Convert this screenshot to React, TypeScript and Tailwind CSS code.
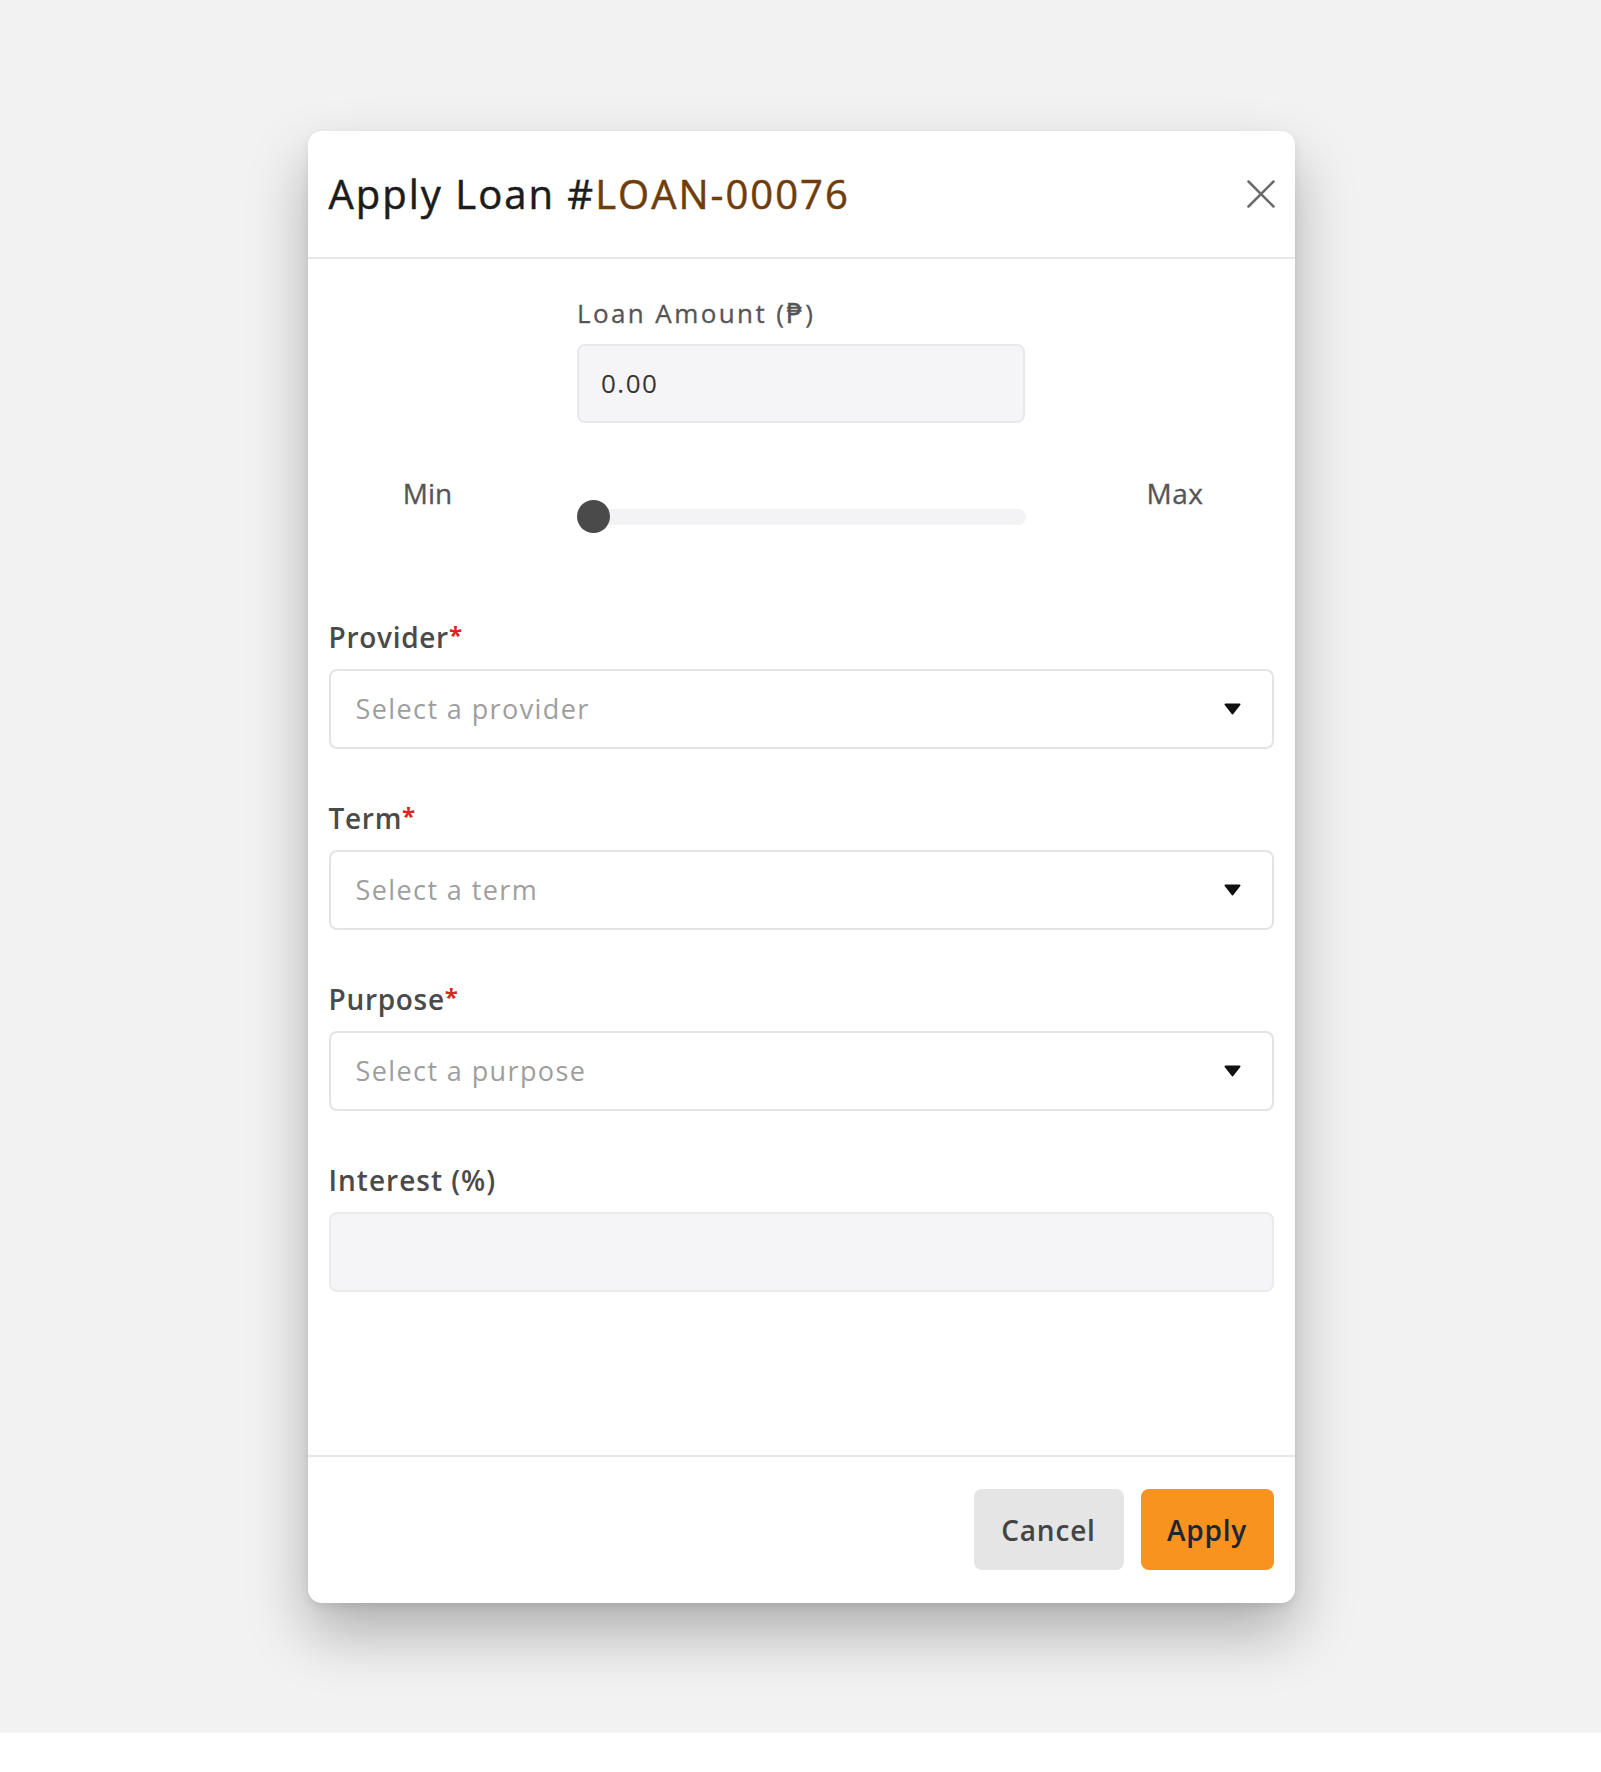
export default function App() {
  const Arrow = () => (
    <svg width="17" height="12" viewBox="0 0 17 12" className="shrink-0">
      <path d="M1.5 1.5 L15.5 1.5 L8.5 10.5 Z" fill="#111" stroke="#111" strokeWidth="2" strokeLinejoin="round" />
    </svg>
  );

  const Req = () => (
    <span className="relative -top-[4px] text-[24px] leading-[0] text-[#e02424] font-bold">*</span>
  );

  return (
    <div className="w-[1601px] min-h-[1772px] bg-white font-['Open_Sans','DejaVu_Sans',sans-serif]">
      <div className="h-[1733px] bg-[#f2f2f2] pt-[131px] pl-[1px] flex justify-center items-start">
        <div className="w-[987px] bg-white rounded-[14px] shadow-[0_30px_60px_rgba(0,0,0,0.28),0_4px_10px_rgba(0,0,0,0.08)] flex flex-col">
          {/* Header */}
          <div className="h-[128px] flex items-center justify-between pl-[21px] pr-[20px] border-b-2 border-[#e8e8eb]">
            <h1 className="text-[40px] leading-[40px] font-medium text-[#1c1c1c] tracking-[2px] [-webkit-text-stroke:0.5px_currentcolor]">
              Apply Loan #<span className="text-[#6f3d0b]">LOAN-00076</span>
            </h1>
            <button className="w-[28px] h-[28px] flex items-center justify-center">
              <svg width="28" height="28" viewBox="0 0 28 28">
                <path d="M1.5 1.5 L26.5 26.5 M26.5 1.5 L1.5 26.5" stroke="#6b6b6b" strokeWidth="2.5" strokeLinecap="round" />
              </svg>
            </button>
          </div>

          {/* Body */}
          <div className="px-[21px] pt-[39px] pb-[163px] flex flex-col">
            <div className="w-[448px] mx-auto">
              <div className="text-[26px] leading-[30px] font-medium text-[#555] tracking-[2.4px] [-webkit-text-stroke:0.3px_currentcolor]">Loan Amount (₱)</div>
              <div className="mt-[16px] h-[79px] bg-[#f5f5f7] border-2 border-[#e9e9ec] rounded-[8px] flex items-center pl-[22px] text-[26px] text-[#333] tracking-[1.5px]">
                0.00
              </div>
            </div>

            <div className="mt-[53px] h-[57px] flex items-start">
              <div className="w-[198px] text-center text-[28px] leading-[34px] font-medium text-[#555] [-webkit-text-stroke:0.3px_currentcolor]">Min</div>
              <div className="ml-[51px] relative w-[448px] h-[33px] mt-[24px]">
                <div className="absolute left-0 right-0 top-[8.5px] h-[16px] rounded-full bg-[#f3f3f5]" />
                <div className="absolute -left-[1px] top-0 w-[33px] h-[33px] rounded-full bg-[#4a4a4a]" />
              </div>
              <div className="ml-[52px] w-[195px] text-center text-[28px] leading-[34px] font-medium text-[#555] tracking-[0.5px] [-webkit-text-stroke:0.3px_currentcolor]">Max</div>
            </div>

            <div className="mt-[87px] flex flex-col gap-[52px]">
              {[
                { label: "Provider", ph: "Select a provider" },
                { label: "Term", ph: "Select a term" },
                { label: "Purpose", ph: "Select a purpose" },
              ].map((f) => (
                <div key={f.label}>
                  <div className="h-[34px] text-[28px] leading-[34px] font-semibold text-[#4a4a4a] tracking-[0.7px]">
                    {f.label}
                    <Req />
                  </div>
                  <div className="mt-[15px] h-[80px] border-2 border-[#e4e4e7] rounded-[8px] flex items-center justify-between pl-[25px] pr-[31px]">
                    <span className="text-[27px] text-[#9e9e9e] tracking-[1.4px]">{f.ph}</span>
                    <Arrow />
                  </div>
                </div>
              ))}
              <div>
                <div className="h-[34px] text-[28px] leading-[34px] font-semibold text-[#4a4a4a] tracking-[1px]">Interest (%)</div>
                <div className="mt-[15px] h-[80px] bg-[#f5f5f7] border-2 border-[#ebebee] rounded-[8px]" />
              </div>
            </div>
          </div>

          {/* Footer */}
          <div className="border-t-2 border-[#e8e8eb] pt-[32px] pb-[33px] px-[21px] flex justify-end gap-[17px]">
            <button className="w-[150px] h-[81px] rounded-[8px] bg-[#e5e5e5] text-[28px] font-semibold text-[#444] tracking-[0.8px]">
              Cancel
            </button>
            <button className="w-[133px] h-[81px] rounded-[8px] bg-[#f7931e] text-[28px] font-semibold text-[#1e2633] tracking-[0.8px]">
              Apply
            </button>
          </div>
        </div>
      </div>
    </div>
  );
}
